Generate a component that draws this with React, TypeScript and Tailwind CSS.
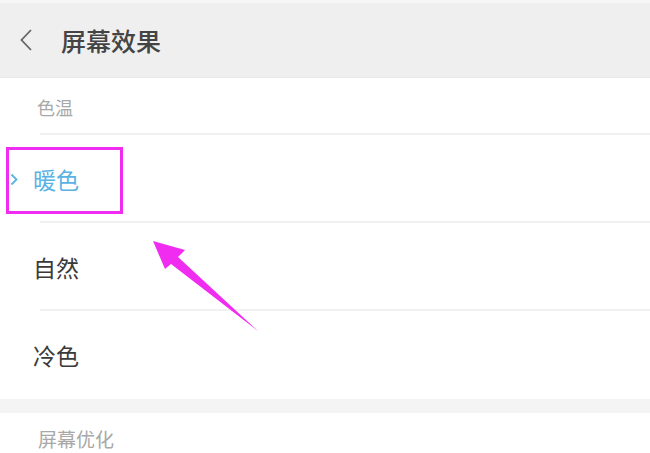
import React from "react";

const font = { fontFamily: '"Noto Sans CJK SC", "Noto Sans", sans-serif' };

const Row: React.FC<{ label: string; active?: boolean; last?: boolean }> = ({
  label,
  active,
  last,
}) => (
  <div className="relative flex h-[88px] items-center pl-[10px]">
    <div className="w-[23px]">
      {active && (
        <svg width="8" height="13" viewBox="0 0 8 13" fill="none">
          <path d="M1.5 1.5L6.5 6.5L1.5 11.5" stroke="#5ab2e4" strokeWidth="1.8" />
        </svg>
      )}
    </div>
    <span
      className={
        "text-[23px] leading-none " + (active ? "text-[#5ab2e4]" : "text-[#3a3a3a]")
      }
    >
      {label}
    </span>
    {!last && <div className="absolute bottom-0 left-[40px] right-0 h-[2px] bg-[#f1f1f1]" />}
  </div>
);

const App: React.FC = () => {
  return (
    <div className="relative h-[453px] w-[650px] overflow-hidden bg-white" style={font}>
      {/* top bar */}
      <div className="h-[3px] bg-[#f6f6f6]" />
      <div className="flex h-[75px] items-center border-b border-[#e8e8e8] bg-[#efefef] pl-[19px]">
        <svg width="14" height="24" viewBox="0 0 14 24" fill="none">
          <path d="M12 2L2.5 12L12 22" stroke="#666" strokeWidth="1.8" />
        </svg>
        <span className="ml-[28px] text-[25px] font-medium leading-none text-[#444]">
          屏幕效果
        </span>
      </div>

      {/* colour temperature */}
      <div className="relative flex h-[57px] items-center pl-[37px]">
        <span className="text-[18px] leading-none text-[#a8a8a8]">色温</span>
        <div className="absolute bottom-0 left-[40px] right-0 h-[2px] bg-[#f1f1f1]" />
      </div>
      <Row label="暖色" active />
      <Row label="自然" />
      <Row label="冷色" last />

      <div className="h-[14px] bg-[#f4f4f4]" />
      <div className="pl-[38px] pt-[16px]">
        <span className="block text-[19px] leading-[20px] text-[#a8a8a8]">屏幕优化</span>
      </div>

      {/* annotation */}
      <div className="absolute left-[6px] top-[147px] h-[67px] w-[117px] border-[3px] border-[#f02cf0]" />
      <svg className="absolute left-0 top-0" width="650" height="453" viewBox="0 0 650 453">
        <polygon
          points="153,241 185,250 178,257 258,331 171,264 165,269"
          fill="#f02cf0"
        />
      </svg>
    </div>
  );
};

export default App;
